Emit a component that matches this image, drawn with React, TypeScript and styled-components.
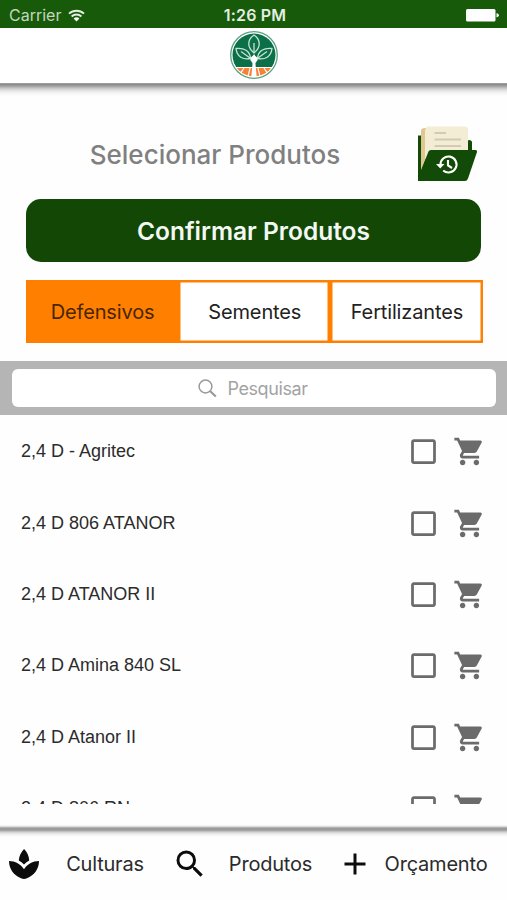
import React, { memo } from "react";
import styled, { createGlobalStyle } from "styled-components";
import {
  MdAdd,
  MdCheckBoxOutlineBlank,
  MdSearch,
  MdShoppingCart,
  MdSpa
} from "react-icons/md";

const GlobalStyle = createGlobalStyle`
  * {
    box-sizing: border-box;
  }

  body {
    margin: 0;
    background: #fefefe;
    font-family: Inter, "Liberation Sans", sans-serif;
  }
`;

const Screen = styled.div`
  display: flex;
  flex-direction: column;
  width: 507px;
  height: 900px;
  overflow: hidden;
  background: #fefefe;
`;

const StatusBar = styled.div`
  display: grid;
  grid-template-columns: 1fr auto 1fr;
  align-items: center;
  flex: none;
  height: 28px;
  padding: 2px 8px 0 9px;
  background: #175a09;
  color: #e4eee2;
  font-size: 16px;
`;

const Carrier = styled.div`
  display: flex;
  align-items: center;
  gap: 7px;
  color: #c3d6bf;
`;

const Clock = styled.div`
  padding-left: 2px;
  font-weight: 600;
  letter-spacing: 0.2px;
`;

const Battery = styled.svg`
  justify-self: end;
`;

const Header = styled.header`
  display: flex;
  justify-content: center;
  flex: none;
  height: 55px;
  padding-top: 2px;
  background: #fff;
`;

const HeaderShadow = styled.div`
  flex: none;
  height: 14px;
  background: linear-gradient(
    #a5a5a5 0,
    #8c8c8c 1.5px,
    #a8a8a8 3.5px,
    #d2d2d2 6px,
    #f0f0f0 9px,
    #fefefe 13px
  );
`;

const TitleRow = styled.div`
  display: flex;
  align-items: center;
  flex: none;
  height: 58px;
  margin-top: 28px;
  padding: 0 28px 0 13px;
`;

const Title = styled.h1`
  flex: 1;
  margin: 0;
  text-align: center;
  font-size: 26px;
  font-weight: 550;
  letter-spacing: 0;
  color: #808080;
`;

const ConfirmButton = styled.button`
  flex: none;
  height: 63px;
  margin: 16px 26px 0;
  padding: 0;
  border: 0;
  border-radius: 15px;
  background: #124706;
  color: #f4f8f3;
  font: 600 24.5px Inter, sans-serif;
  letter-spacing: 0;
`;

const Tabs = styled.div`
  display: grid;
  grid-template-columns: repeat(3, 1fr);
  flex: none;
  height: 63px;
  margin: 18px 24.5px 0 26px;
`;

const Tab = styled.button<{ $active?: boolean }>`
  padding: 0 0 0 1px;
  border: 0;
  background: ${({ $active }) => ($active ? "#ff8000" : "#fff")};
  box-shadow: inset 0 0 0 2.5px #ff8000;
  color: ${({ $active }) => ($active ? "#4a2600" : "#222")};
  font: 400 20px Inter, sans-serif;
  letter-spacing: -0.15px;
`;

const SearchBar = styled.div`
  flex: none;
  height: 54px;
  margin-top: 18px;
  padding: 8px 11px 8px 12px;
  background: #b5b5b5;
`;

const SearchField = styled.div`
  display: flex;
  align-items: center;
  justify-content: center;
  gap: 10px;
  height: 38px;
  padding-right: 2px;
  border-radius: 6px;
  background: #fff;
  color: #a3a3a3;
  font-size: 18px;
  letter-spacing: -0.4px;
`;

const List = styled.ul`
  flex: none;
  height: 389px;
  margin: 0;
  padding: 1px 0 0;
  overflow: hidden;
  list-style: none;
`;

const Row = styled.li`
  display: flex;
  align-items: center;
  height: 71.4px;
  padding: 0 21px;
  color: #6b6b6b;
`;

const Name = styled.span`
  flex: 1;
  font: 18px "Liberation Sans", Arial, sans-serif;
  color: #2b2b2b;
`;

const Actions = styled.div`
  display: flex;
  gap: 13px;

  svg {
    display: block;
  }
`;

const FooterShadow = styled.div`
  flex: none;
  height: 14px;
  margin-top: 21px;
  background: linear-gradient(
    #fefefe 0,
    #dcdcdc 1.5px,
    #9c9c9c 3px,
    #999 5px,
    #cfcfcf 7px,
    #ededed 9px,
    #fefefe 12px
  );
`;

const Footer = styled.nav`
  display: grid;
  grid-template-columns: repeat(3, 165.5px);
  flex: 1;
  align-items: start;
  padding: 7px 0 0 6px;
`;

const FooterItem = styled.div`
  display: flex;
  align-items: center;
  height: 36px;
  color: #0c0c0c;
`;

const FooterLabel = styled.span`
  width: 126px;
  text-align: center;
  font-size: 20px;
  letter-spacing: -0.2px;
  color: #2b2b2b;
`;

const WifiIcon = memo(() => (
  <svg width="17" height="13" viewBox="0 0 17 13" fill="none">
    <path
      d="M1 4.6C5.2 .7 11.8 .7 16 4.6M3.6 7.5C6.4 4.9 10.6 4.9 13.4 7.5"
      stroke="#e4eee2"
      strokeWidth="1.9"
    />
    <path d="M5.6 9.4C7.3 7.9 9.7 7.9 11.4 9.4L8.5 12.6Z" fill="#fff" />
  </svg>
));

const Logo = memo(() => (
  <svg width="50" height="50" viewBox="0 0 50 50" fill="none">
    <circle cx="25" cy="25" r="23.3" fill="#fff" stroke="#5e9f86" strokeWidth="1.3" />
    <clipPath id="disc">
      <circle cx="25" cy="25" r="21.5" />
    </clipPath>
    <g clipPath="url(#disc)">
      <rect width="50" height="37" fill="#0b7048" />
      <rect y="37" width="50" height="13" fill="#fff" />
      <path
        d="M3 38H14.5L10 44L3 45ZM15.5 38H20.5L18 48L11.5 45ZM21.7 38H23.8L23.3 48H19.2ZM26.2 38H28.3L30.8 48H26.7ZM29.5 38H34.5L38.5 45L32 48ZM35.5 38H47V45L40 44Z"
        fill="#f58236"
      />
    </g>
    <g stroke="#c5e2d6" strokeWidth="1.3" fill="#0b7048">
      <path d="M25 5C18 10 18 17 25 23C32 17 32 10 25 5Z" />
      <path d="M7 18.5C8 27 14 30 21.5 28.5C21 21 15 17.5 7 18.5Z" />
      <path d="M43 18.5C42 27 36 30 28.5 28.5C29 21 35 17.5 43 18.5Z" />
      <path d="M25 13V23M12 21.5L21 28M38 21.5L29 28" fill="none" />
    </g>
    <path
      d="M25 24C23.5 27 21 27 21.5 30C22 32 23.5 31.5 23.5 34L22.3 47H27.7L26.5 34C26.5 31.5 28 32 28.5 30C29 27 26.5 27 25 24Z"
      fill="#fff"
    />
  </svg>
));

const HistoryFolder = memo(() => (
  <svg width="62" height="58" viewBox="0 0 62 58" fill="none">
    <path d="M1 10.5H5V20H50V17.5Q50 15 52 15Q55 15 55 17.5V30L45 56H1Z" fill="#124a08" />
    <path d="M4 5.5Q4 3 8 3H12V26L4 46Z" fill="#e0c78f" />
    <path d="M10 1.5H48Q51 1.5 51 4.5V34H8V5Z" fill="#f4edd5" />
    <path d="M17.5 8H29M17.5 14.5H44M17.5 21H44" stroke="#d3cab4" strokeWidth="1.8" />
    <path d="M11.5 26.5Q12 25 14 25H58.5Q60.5 25 60 27L51 53.5Q50 56 48 56H1V53Z" fill="#124a08" />
    <path
      d="M23.5 40A8 8 0 1 1 26.2 45.5M31 35V40.5L35 43"
      stroke="#fff"
      strokeWidth="2.1"
    />
    <path d="M19 39H27.5L23.2 43.5Z" fill="#fff" />
  </svg>
));

const SearchGlyph = memo(() => (
  <svg width="19" height="19" viewBox="0 0 19 19" fill="none">
    <circle cx="7.5" cy="7.5" r="6.4" stroke="#999" strokeWidth="1.5" />
    <path d="M12 12L17.8 17.5" stroke="#999" strokeWidth="2.2" />
  </svg>
));

const products = [
  "2,4 D - Agritec",
  "2,4 D 806 ATANOR",
  "2,4 D ATANOR II",
  "2,4 D Amina 840 SL",
  "2,4 D Atanor II",
  "2,4 D 806 RN"
];

const links = [
  { label: "Culturas", Icon: MdSpa },
  { label: "Produtos", Icon: MdSearch },
  { label: "Orçamento", Icon: MdAdd }
];

export default function App() {
  return (
    <Screen>
      <GlobalStyle />
      <StatusBar>
        <Carrier>
          Carrier
          <WifiIcon />
        </Carrier>
        <Clock>1:26 PM</Clock>
        <Battery width="33" height="13" viewBox="0 0 33 13">
          <rect width="29.5" height="12.5" rx="1.5" fill="#fff" />
          <path d="M30.5 4Q33 5 33 6.3Q33 7.6 30.5 8.5Z" fill="#fff" />
        </Battery>
      </StatusBar>
      <Header>
        <Logo />
      </Header>
      <HeaderShadow />
      <TitleRow>
        <Title>Selecionar Produtos</Title>
        <HistoryFolder />
      </TitleRow>
      <ConfirmButton>Confirmar Produtos</ConfirmButton>
      <Tabs>
        <Tab $active>Defensivos</Tab>
        <Tab>Sementes</Tab>
        <Tab>Fertilizantes</Tab>
      </Tabs>
      <SearchBar>
        <SearchField>
          <SearchGlyph />
          Pesquisar
        </SearchField>
      </SearchBar>
      <List>
        {products.map(name => (
          <Row key={name}>
            <Name>{name}</Name>
            <Actions>
              <MdCheckBoxOutlineBlank size={33} />
              <MdShoppingCart size={33} />
            </Actions>
          </Row>
        ))}
      </List>
      <FooterShadow />
      <Footer>
        {links.map(({ label, Icon }) => (
          <FooterItem key={label}>
            <Icon size={36} />
            <FooterLabel>{label}</FooterLabel>
          </FooterItem>
        ))}
      </Footer>
    </Screen>
  );
}
